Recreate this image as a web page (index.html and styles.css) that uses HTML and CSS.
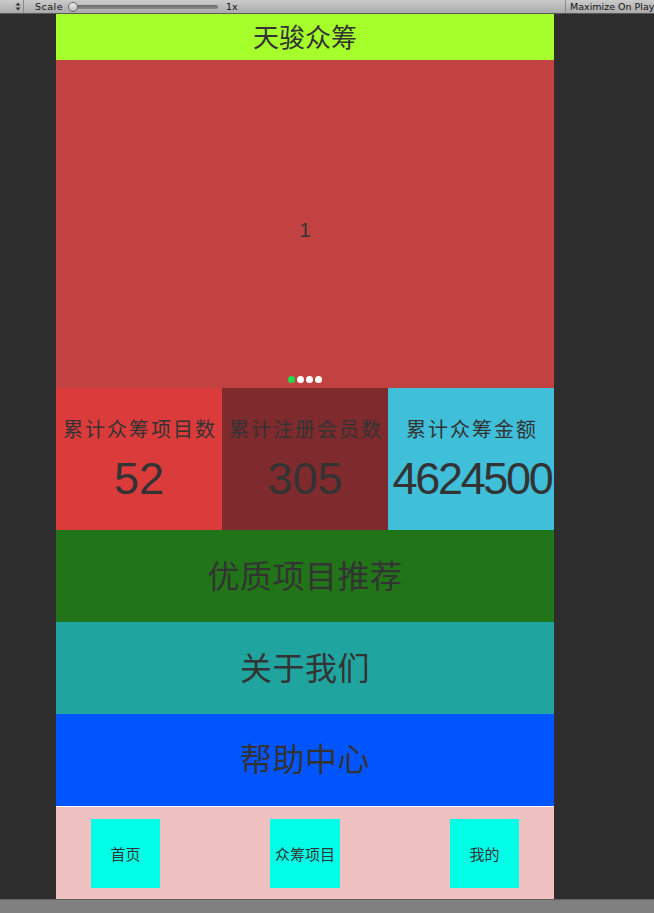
FILE: index.html
```html
<!DOCTYPE html>
<html lang="zh">
<head>
<meta charset="utf-8">
<title>天骏众筹</title>
<link rel="stylesheet" href="styles.css">
</head>
<body>
<div class="toolbar">
  <div class="tb-arrows">
    <svg width="6" height="9" viewBox="0 0 6 9"><path d="M3 0.5 L5.5 3.5 H0.5 Z M3 8.5 L5.5 5.5 H0.5 Z" fill="#333"/></svg>
  </div>
  <span class="tb-label">Scale</span>
  <div class="tb-slider">
    <span class="tb-knob"></span>
    <span class="tb-track"></span>
  </div>
  <span class="tb-value">1x</span>
  <div class="tb-spacer"></div>
  <div class="tb-right">Maximize On Play</div>
</div>
<div class="stage">
  <div class="phone">
    <header class="app-header">天骏众筹</header>
    <section class="banner">
      <span class="banner-num">1</span>
      <div class="dots">
        <span class="dot active"></span>
        <span class="dot"></span>
        <span class="dot"></span>
        <span class="dot"></span>
      </div>
    </section>
    <section class="stats">
      <div class="stat stat-red">
        <div class="stat-label">累计众筹项目数</div>
        <div class="stat-num">52</div>
      </div>
      <div class="stat stat-dark">
        <div class="stat-label">累计注册会员数</div>
        <div class="stat-num">305</div>
      </div>
      <div class="stat stat-blue">
        <div class="stat-label">累计众筹金额</div>
        <div class="stat-num tight">4624500</div>
      </div>
    </section>
    <section class="row row-green">优质项目推荐</section>
    <section class="row row-teal">关于我们</section>
    <section class="row row-blue">帮助中心</section>
    <nav class="tabbar">
      <div class="tab">首页</div>
      <div class="tab">众筹项目</div>
      <div class="tab">我的</div>
    </nav>
  </div>
</div>
<div class="statusbar"></div>
</body>
</html>
```

FILE: styles.css
```css
* { box-sizing: border-box; }
html, body { margin: 0; padding: 0; }
body {
  width: 654px;
  height: 913px;
  overflow: hidden;
  background: #2d2d2d;
  font-family: "Liberation Sans", "Noto Sans CJK SC", sans-serif;
  color: #333;
  display: flex;
  flex-direction: column;
}

.toolbar {
  height: 14px;
  flex: none;
  display: flex;
  align-items: center;
  background: linear-gradient(#cbcbcb, #aaaaaa);
  border-bottom: 1px solid #5a5a5a;
  font-family: "DejaVu Sans", sans-serif;
  font-size: 9.5px;
  color: #111;
  white-space: nowrap;
  overflow: hidden;
}
.tb-arrows {
  width: 24px;
  height: 13px;
  display: flex;
  align-items: center;
  justify-content: flex-end;
  padding-right: 2px;
  border-right: 1px solid #8a8a8a;
}
.tb-label { margin-left: 11px; letter-spacing: 0.5px; }
.tb-slider {
  display: flex;
  align-items: center;
  margin-left: 5px;
}
.tb-knob {
  width: 10px;
  height: 10px;
  border-radius: 50%;
  border: 1px solid #666;
  background: linear-gradient(#eee, #bbb);
  position: relative;
  z-index: 1;
}
.tb-track {
  width: 142px;
  height: 4px;
  margin-left: -2px;
  border-radius: 2px;
  background: linear-gradient(#6a6a6a, #8a8a8a);
}
.tb-value { margin-left: 8px; }
.tb-spacer { flex: 1; }
.tb-right {
  width: 89px;
  height: 13px;
  padding-left: 4px;
  line-height: 13px;
  border-left: 1px solid #8a8a8a;
  overflow: hidden;
}

.stage {
  flex: 1;
  display: flex;
  justify-content: flex-start;
  padding-left: 56px;
  min-height: 0;
}
.phone {
  width: 498px;
  display: flex;
  flex-direction: column;
}

.app-header {
  height: 46px;
  background: #a6ff2b;
  display: flex;
  align-items: center;
  justify-content: center;
  font-size: 26px;
  padding-bottom: 4px;
}

.banner {
  height: 328px;
  background: #c24242;
  position: relative;
  display: flex;
  align-items: center;
  justify-content: center;
  padding-top: 12px;
  font-size: 20px;
}
.dots {
  position: absolute;
  left: 0;
  right: 0;
  bottom: 5px;
  display: flex;
  justify-content: center;
  gap: 2px;
}
.dot {
  width: 7px;
  height: 7px;
  border-radius: 50%;
  background: #fff;
}
.dot.active { background: #1ee04a; }

.stats {
  height: 142px;
  display: grid;
  grid-template-columns: 166px 166px 166px;
}
.stat {
  display: flex;
  flex-direction: column;
  align-items: center;
  padding-top: 29px;
  overflow: hidden;
}
.stat-red { background: #db3b3b; }
.stat-dark { background: #7f2a2d; }
.stat-blue { background: #40bfda; }
.stat-label {
  font-size: 20px;
  letter-spacing: 2px;
  margin-right: -2px;
  line-height: 26px;
  white-space: nowrap;
}
.stat-num {
  font-size: 45px;
  line-height: 52px;
  margin-top: 10px;
  white-space: nowrap;
}
.stat-num.tight { letter-spacing: -2.3px; margin-right: -2px; }

.row {
  height: 92px;
  display: flex;
  align-items: center;
  justify-content: center;
  font-size: 32px;
  letter-spacing: 0.5px;
  padding-bottom: 5px;
}
.row-green { background: #217418; }
.row-teal { background: #20a4a0; }
.row-blue { background: #0055ff; border-bottom: 1px solid #fff; height: 93px; padding-bottom: 6px; }

.tabbar {
  height: 92px;
  background: #f0c1c1;
  display: flex;
  align-items: center;
  justify-content: space-between;
  padding: 0 35px;
}
.tab {
  width: 69px;
  height: 69px;
  background: #00ffe6;
  display: flex;
  align-items: center;
  justify-content: center;
  font-size: 15px;
  white-space: nowrap;
}
.tab:nth-child(2) { width: 70px; }

.statusbar {
  height: 14px;
  flex: none;
  background: #808080;
  border-top: 1px solid #606060;
}
```
